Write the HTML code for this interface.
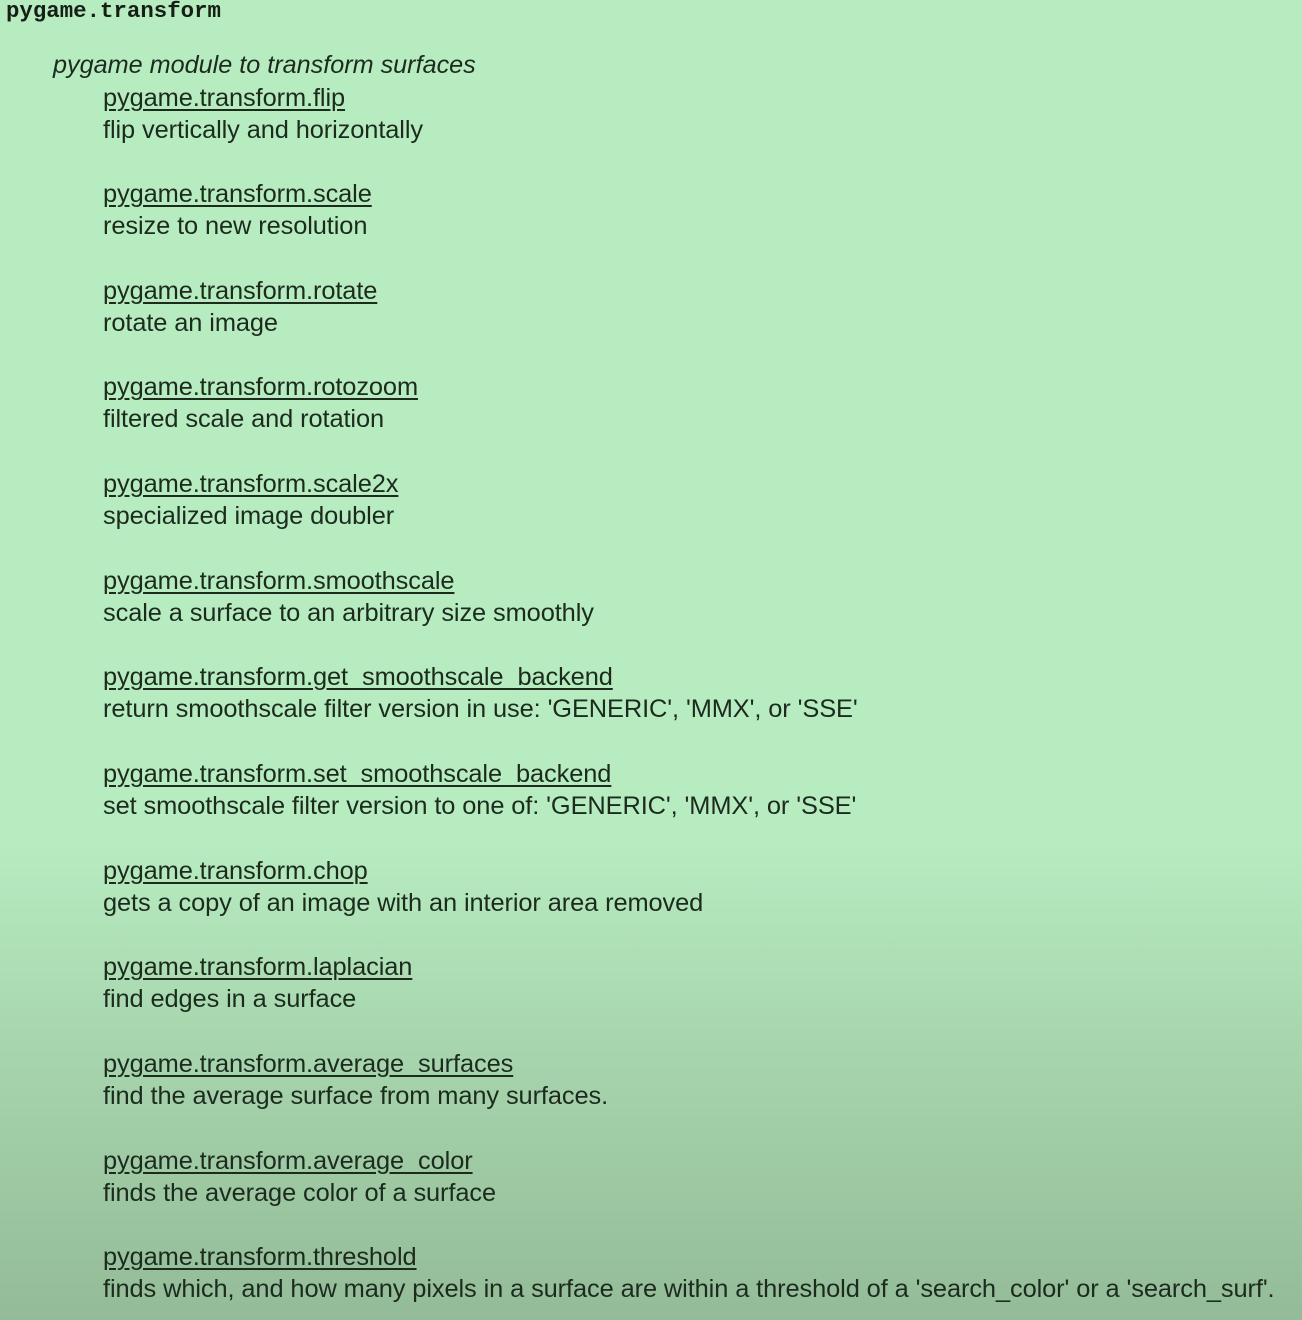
<!DOCTYPE html>
<html><head><meta charset="utf-8"><style>
html,body{margin:0;padding:0}
body{width:1302px;height:1320px;overflow:hidden;position:relative;
background:linear-gradient(to bottom,#b7ecc0 0px,#b7ecc0 840px,#a6d4ac 1060px,#93bb97 1320px);
font-family:"Liberation Sans",Arial,sans-serif;color:#1c2b1e}
.t{position:absolute;left:6px;top:-2px;font-family:"Liberation Mono",monospace;font-weight:bold;font-size:22.4px;line-height:26px;color:#151f16}
.s{position:absolute;left:53px;top:49px;font-style:italic;font-size:25.2px;line-height:32px}
.l,.d{position:absolute;left:103px;font-size:25.4px;line-height:32px;white-space:nowrap;letter-spacing:-0.1px}
.l{text-decoration:underline;text-decoration-thickness:1.5px;text-underline-offset:3px}
</style></head><body>
<div class="t">pygame.transform</div>
<div class="s">pygame module to transform surfaces</div>
<div class="l" style="top:82px">pygame.transform.flip</div>
<div class="d" style="top:114px">flip vertically and horizontally</div>
<div class="l" style="top:178px">pygame.transform.scale</div>
<div class="d" style="top:210px">resize to new resolution</div>
<div class="l" style="top:275px">pygame.transform.rotate</div>
<div class="d" style="top:307px">rotate an image</div>
<div class="l" style="top:371px">pygame.transform.rotozoom</div>
<div class="d" style="top:403px">filtered scale and rotation</div>
<div class="l" style="top:468px">pygame.transform.scale2x</div>
<div class="d" style="top:500px">specialized image doubler</div>
<div class="l" style="top:565px">pygame.transform.smoothscale</div>
<div class="d" style="top:597px">scale a surface to an arbitrary size smoothly</div>
<div class="l" style="top:661px">pygame.transform.get_smoothscale_backend</div>
<div class="d" style="top:693px">return smoothscale filter version in use: 'GENERIC', 'MMX', or 'SSE'</div>
<div class="l" style="top:758px">pygame.transform.set_smoothscale_backend</div>
<div class="d" style="top:790px">set smoothscale filter version to one of: 'GENERIC', 'MMX', or 'SSE'</div>
<div class="l" style="top:855px">pygame.transform.chop</div>
<div class="d" style="top:887px">gets a copy of an image with an interior area removed</div>
<div class="l" style="top:951px">pygame.transform.laplacian</div>
<div class="d" style="top:983px">find edges in a surface</div>
<div class="l" style="top:1048px">pygame.transform.average_surfaces</div>
<div class="d" style="top:1080px">find the average surface from many surfaces.</div>
<div class="l" style="top:1145px">pygame.transform.average_color</div>
<div class="d" style="top:1177px">finds the average color of a surface</div>
<div class="l" style="top:1241px">pygame.transform.threshold</div>
<div class="d" style="top:1273px">finds which, and how many pixels in a surface are within a threshold of a 'search_color' or a 'search_surf'.</div>
</body></html>
